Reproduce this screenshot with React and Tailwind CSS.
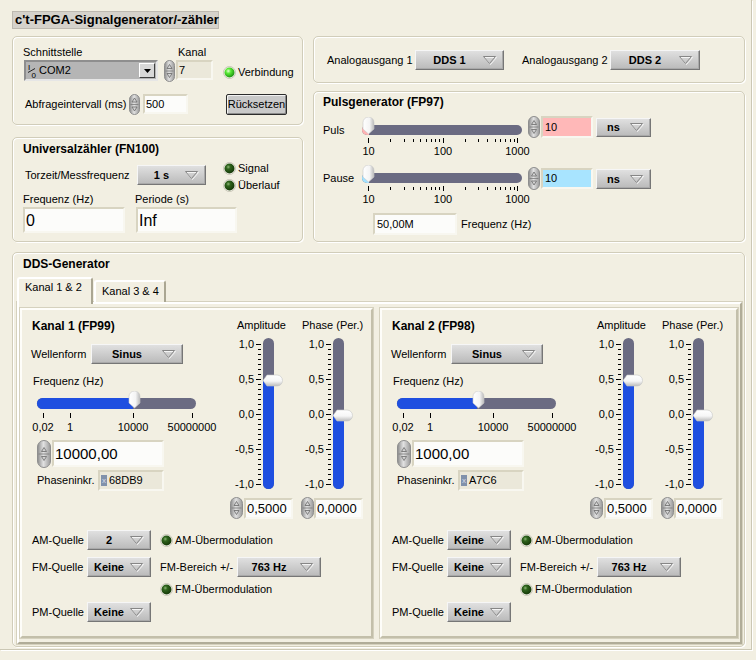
import React from "react";

const SF = "'Liberation Sans', Arial, sans-serif";

function Tri() {
  return (
    <svg width="14" height="9" viewBox="0 0 14 9" className="shrink-0">
      <polygon points="1.5,1.5 13.5,1.5 7.5,8.5" fill="none" stroke="#f4f4f4" />
      <polygon points="0.5,0.5 12.5,0.5 6.5,7.5" fill="none" stroke="#868686" />
    </svg>
  );
}

function Ring({ cls, text }) {
  return (
    <div
      className={`flex items-center shrink-0 border border-t-[#f6f6f6] border-l-[#f6f6f6] border-r-[#767676] border-b-[#767676] bg-linear-to-b from-[#e0e0e0] via-[#cdcdcd] to-[#bababa] shadow-[inset_-1px_-1px_0_#a9a9a9] ${cls}`}
    >
      <span className="flex-1 text-center text-[11px] font-bold leading-none whitespace-nowrap">{text}</span>
      <span className="pr-[6px] flex items-center">
        <Tri />
      </span>
    </div>
  );
}

function Spin({ w = 12, h = 22 }) {
  const m = h / 2;
  const c = w / 2;
  return (
    <svg width={w} height={h} viewBox={`0 0 ${w} ${h}`} className="shrink-0 block">
      <defs>
        <linearGradient id="spg" x1="0" y1="0" x2="1" y2="0">
          <stop offset="0" stopColor="#8a8a8a" />
          <stop offset="0.45" stopColor="#e2e2e2" />
          <stop offset="1" stopColor="#999999" />
        </linearGradient>
      </defs>
      <rect x="0.5" y="0.5" width={w - 1} height={h - 1} rx={(w - 1) / 2} fill="url(#spg)" stroke="#8e8e8e" />
      <line x1="1.5" y1={m} x2={w - 1.5} y2={m} stroke="#7a7a7a" strokeWidth="0.8" />
      <path d={`M${c - 2.5} ${m - 2.5} L${c} ${m - 6.5} L${c + 2.5} ${m - 2.5} Z`} fill="#d4d4d4" stroke="#6a6a6a" strokeWidth="0.8" />
      <path d={`M${c - 2.5} ${m + 2.5} L${c} ${m + 6.5} L${c + 2.5} ${m + 2.5} Z`} fill="#d4d4d4" stroke="#6a6a6a" strokeWidth="0.8" />
    </svg>
  );
}

function Led({ on = false }) {
  const id = on ? "ledOn" : "ledOff";
  return (
    <svg width="13" height="13" viewBox="0 0 13 13" className="shrink-0 block">
      <defs>
        <radialGradient id="ledOn" cx="0.38" cy="0.35" r="0.7">
          <stop offset="0" stopColor="#e4ffd0" />
          <stop offset="0.35" stopColor="#5aea36" />
          <stop offset="1" stopColor="#1a8a0e" />
        </radialGradient>
        <radialGradient id="ledOff" cx="0.38" cy="0.35" r="0.7">
          <stop offset="0" stopColor="#8cb676" />
          <stop offset="0.3" stopColor="#2f641c" />
          <stop offset="1" stopColor="#133406" />
        </radialGradient>
      </defs>
      <circle cx="6.5" cy="6.5" r="6" fill="#fbfaf3" stroke="#bdb9a8" strokeWidth="0.8" />
      <circle cx="6.5" cy="6.5" r="5" fill={`url(#${id})`} />
    </svg>
  );
}

function Field({ cls = "", bg = "bg-[#fcfcfa]", children }) {
  return (
    <div
      className={`flex items-center shrink-0 overflow-hidden whitespace-nowrap border-2 border-t-[#d8d4c1] border-l-[#d8d4c1] border-r-[#f8f7f0] border-b-[#f8f7f0] pl-[1px] ${bg} ${cls}`}
    >
      {children}
    </div>
  );
}

function HThumb() {
  return (
    <svg width="13" height="18" viewBox="0 0 13 18" className="block">
      <defs>
        <linearGradient id="htg" x1="0" y1="0" x2="1" y2="0">
          <stop offset="0" stopColor="#ffffff" />
          <stop offset="0.6" stopColor="#f4f4f4" />
          <stop offset="1" stopColor="#b9b9b9" />
        </linearGradient>
      </defs>
      <path d="M1 5.5 A5.5 5.5 0 0 1 12 5.5 V12 L6.5 17 L1 12 Z" fill="url(#htg)" stroke="#c8c8c8" strokeWidth="0.6" />
    </svg>
  );
}

function VThumb() {
  return (
    <svg width="21" height="13" viewBox="0 0 21 13" className="block">
      <defs>
        <linearGradient id="vtg" x1="0" y1="0" x2="0" y2="1">
          <stop offset="0" stopColor="#ffffff" />
          <stop offset="0.55" stopColor="#f6f6f6" />
          <stop offset="1" stopColor="#bcbcbc" />
        </linearGradient>
      </defs>
      <path d="M1 6.5 L5 1 H15 A5.5 5.5 0 0 1 15 12 H5 Z" fill="url(#vtg)" stroke="#c6c6c6" strokeWidth="0.6" />
    </svg>
  );
}

function LogScale() {
  const ticks = [];
  [10, 100].forEach((b) => {
    for (let k = 1; k < 10; k++) ticks.push({ v: b * k, major: k === 1 });
  });
  ticks.push({ v: 1000, major: true });
  const xp = (v) => 6 + 74.5 * Math.log10(v / 10);
  return (
    <svg width="160" height="22" className="block overflow-visible">
      {ticks.map((t) => {
        const x = Math.round(xp(t.v)) + 0.5;
        return <line key={t.v} x1={x} x2={x} y1={t.major ? 3 : 4} y2={t.major ? 8 : 7} stroke="#000" />;
      })}
      {[
        ["10", 10],
        ["100", 100],
        ["1000", 1000],
      ].map(([s, v]) => (
        <text key={s} x={xp(v) + 0.5} y="20" textAnchor="middle" fontSize="11" fontFamily={SF} fill="#000">
          {s}
        </text>
      ))}
    </svg>
  );
}

function FreqScale() {
  const t = [
    ["0,02", 6],
    ["1", 33],
    ["10000", 96],
    ["50000000", 155],
  ];
  return (
    <svg width="159" height="24" className="block overflow-visible">
      {t.map(([s, x]) => (
        <g key={s}>
          <line x1={x + 0.5} x2={x + 0.5} y1="4" y2="9" stroke="#000" />
          <text x={x} y="22" textAnchor="middle" fontSize="11" fontFamily={SF} fill="#000">
            {s}
          </text>
        </g>
      ))}
    </svg>
  );
}

function VScale() {
  const majors = [
    ["1,0", 6],
    ["0,5", 41],
    ["0,0", 76],
    ["-0,5", 111],
    ["-1,0", 146],
  ];
  const minors = [];
  for (let i = 0; i < 4; i++) for (let k = 1; k < 7; k++) minors.push(6 + 35 * i + 5 * k);
  return (
    <svg width="35" height="151" className="shrink-0 block overflow-visible">
      {majors.map(([t, y]) => (
        <g key={t}>
          <line x1="28" x2="33" y1={y + 0.5} y2={y + 0.5} stroke="#000" />
          <text x="26" y={y + 4} textAnchor="end" fontSize="11" fontFamily={SF} fill="#000">
            {t}
          </text>
        </g>
      ))}
      {minors.map((y) => (
        <line key={y} x1="30" x2="33" y1={y + 0.5} y2={y + 0.5} stroke="#000" />
      ))}
    </svg>
  );
}

function VCol({ label, labelCls, thumbCls, fillCls, value, spinCls, fieldCls }) {
  return (
    <div className="flex flex-col w-[70px] shrink-0">
      <div className={`mt-[9px] h-[13px] whitespace-nowrap ${labelCls}`}>{label}</div>
      <div className="relative mt-[6px] h-[151px] flex">
        <VScale />
        <div className="w-[11px] h-[151px] rounded-full bg-[#6b6b82] flex flex-col justify-end overflow-hidden">
          <div className={`w-full bg-[#1f4fe0] ${fillCls}`} />
        </div>
        <div className={`absolute left-[34px] ${thumbCls}`}>
          <VThumb />
        </div>
      </div>
      <div className="mt-[8px] flex items-start">
        <div className={spinCls}>
          <Spin w={13} h={22} />
        </div>
        <Field cls={`mt-[1px] h-[21px] text-[13px] ${fieldCls}`}>{value}</Field>
      </div>
    </div>
  );
}

function Channel({ title, freq, inc, am, fillCls, thumbCls, widthCls }) {
  return (
    <div
      className={`flex flex-col shrink-0 h-[330px] border-2 border-t-[#fefdf9] border-l-[#fefdf9] border-r-[#c3bfaa] border-b-[#c3bfaa] shadow-[0_0_0_1px_#d5d1be] ${widthCls}`}
    >
      <div className="flex">
        <div className="flex flex-col w-[206px] shrink-0">
          <div className="mt-[9px] pl-[10px] h-[14px] text-[12px] font-bold leading-[14px] whitespace-nowrap">{title}</div>
          <div className="mt-[11px] flex items-center h-[20px]">
            <span className="ml-[9px] w-[60px]">Wellenform</span>
            <Ring cls="w-[92px] h-[20px]" text="Sinus" />
          </div>
          <div className="mt-[11px] pl-[11px] h-[13px]">Frequenz (Hz)</div>
          <div className="mt-[3px] ml-[15px] h-[42px]">
            <div className="relative mt-[7px] w-[159px] h-[11px] rounded-full bg-[#6b6b82]">
              <div className={`h-full rounded-l-full bg-[#1f4fe0] ${fillCls}`} />
              <div className={`absolute top-[-7px] ${thumbCls}`}>
                <HThumb />
              </div>
            </div>
            <FreqScale />
          </div>
          <div className="mt-[7px] ml-[15px] flex items-start">
            <Spin w={14} h={28} />
            <Field cls="ml-[1px] w-[112px] h-[27px] text-[15px]">{freq}</Field>
          </div>
          <div className="mt-[2px] ml-[15px] flex items-center">
            <span className="w-[61px]">Phaseninkr.</span>
            <Field cls="w-[66px] h-[21px]" bg="bg-[#ebe8da]">
              <span className="flex items-center justify-center w-[6px] h-[11px] bg-[#8091ab] text-[8px] leading-none text-[#d8dcea] mr-[2px]">
                x
              </span>
              {inc}
            </Field>
          </div>
        </div>
        <VCol
          label="Amplitude"
          labelCls="pl-[9px]"
          thumbCls="top-[36px]"
          fillCls="h-[109px]"
          value="0,5000"
          spinCls="ml-[2px]"
          fieldCls="ml-[1px] w-[49px]"
        />
        <VCol
          label="Phase (Per.)"
          labelCls="pl-[4px]"
          thumbCls="top-[71px]"
          fillCls="h-[75px]"
          value="0,0000"
          spinCls="ml-[3px]"
          fieldCls="w-[49px]"
        />
      </div>
      <div className="mt-[11px] flex items-center h-[20px]">
        <span className="ml-[10px] w-[55px]">AM-Quelle</span>
        <Ring cls="w-[64px] h-[20px]" text={am} />
        <span className="ml-[9px]">
          <Led />
        </span>
        <span className="ml-[2px]">AM-Übermodulation</span>
      </div>
      <div className="mt-[7px] flex items-center h-[20px]">
        <span className="ml-[10px] w-[55px]">FM-Quelle</span>
        <Ring cls="w-[64px] h-[20px]" text="Keine" />
        <span className="ml-[9px] w-[77px] whitespace-nowrap">FM-Bereich +/-</span>
        <Ring cls="w-[84px] h-[20px]" text="763 Hz" />
      </div>
      <div className="mt-[6px] flex items-center h-[13px]">
        <span className="ml-[138px]">
          <Led />
        </span>
        <span className="ml-[2px]">FM-Übermodulation</span>
      </div>
      <div className="mt-[6px] flex items-center h-[20px]">
        <span className="ml-[10px] w-[55px]">PM-Quelle</span>
        <Ring cls="w-[64px] h-[20px]" text="Keine" />
      </div>
    </div>
  );
}

const panel =
  "rounded-[5px] border border-[#d1cdba] shadow-[inset_1px_1px_0_#ffffff,1px_1px_0_#ffffff]";

function IOIcon() {
  return (
    <svg width="11" height="16" viewBox="0 0 11 16" className="shrink-0 block">
      <text x="1" y="7" fontSize="8" fontFamily={SF} fill="#000">I</text>
      <line x1="1" y1="9.5" x2="8" y2="5.5" stroke="#000" strokeWidth="0.8" />
      <text x="4.5" y="15" fontSize="8" fontFamily={SF} fill="#000">0</text>
    </svg>
  );
}

export default function App() {
  return (
    <div className="w-[756px] h-[660px] overflow-hidden bg-[#f2efe2] text-black text-[11px] leading-[13px] font-['Liberation_Sans',Arial,sans-serif]">
      <div className="w-[752px] h-[650px] border-r border-b border-[#cbc7b4] shadow-[1px_1px_0_#ffffff] pl-[12px] pt-[11px]">
        {/* Title */}
        <div className="flex items-center h-[18px] w-[207px] px-[2px] bg-[#d5d2cb] border border-[#bdb9b0] text-[13px] font-bold leading-[16px] whitespace-nowrap">
          c't-FPGA-Signalgenerator/-zähler
        </div>

        <div className="mt-[7px] flex gap-[10px]">
          {/* Left column */}
          <div className="flex flex-col gap-[12px] w-[291px] shrink-0">
            <div className={`${panel} h-[89px] flex flex-col`}>
              <div className="mt-[9px] flex h-[13px]">
                <span className="ml-[10px] w-[155px]">Schnittstelle</span>
                <span>Kanal</span>
              </div>
              <div className="mt-[1px] flex items-start">
                <div className="ml-[11px] w-[134px] h-[21px] flex items-center bg-[#b5b5b5] border-2 border-t-[#8e8e8e] border-l-[#8e8e8e] border-r-[#e6e6e6] border-b-[#e6e6e6]">
                  <span className="ml-[1px]">
                    <IOIcon />
                  </span>
                  <span className="ml-[1px]">COM2</span>
                  <div className="ml-auto mr-[1px] w-[16px] h-[15px] flex items-center justify-center bg-[#d8d8d8] border border-t-[#ffffff] border-l-[#ffffff] border-r-[#404040] border-b-[#404040]">
                    <svg width="7" height="4" viewBox="0 0 7 4" className="block">
                      <polygon points="0,0 7,0 3.5,4" fill="#000" />
                    </svg>
                  </div>
                </div>
                <span className="ml-[6px]">
                  <Spin w={11} h={22} />
                </span>
                <Field cls="ml-[1px] w-[37px] h-[20px]" bg="bg-[#ebe8da]">
                  7
                </Field>
                <div className="ml-[10px] mt-[6px] h-[13px] flex items-center">
                  <Led on />
                  <span className="ml-[2px]">Verbindung</span>
                </div>
              </div>
              <div className="mt-[11px] flex items-center">
                <span className="ml-[12px] w-[104px] whitespace-nowrap">Abfrageintervall (ms)</span>
                <Spin w={11} h={21} />
                <Field cls="ml-[3px] w-[45px] h-[20px]">500</Field>
                <div className="ml-[38px] mt-[1px] w-[61px] h-[21px] flex items-center justify-center bg-[#c9c9c9] border border-[#2c2c2c] rounded-[2px] shadow-[inset_1px_1px_0_#f2f2f2,inset_-1px_-1px_0_#8c8c8c]">
                  Rücksetzen
                </div>
              </div>
            </div>

            <div className={`${panel} h-[105px] flex flex-col`}>
              <div className="mt-[4px] pl-[10px] h-[14px] text-[12px] font-bold leading-[14px]">Universalzähler (FN100)</div>
              <div className="mt-[4px] h-[32px] flex items-start">
                <div className="mt-[5px] h-[20px] flex items-center">
                  <span className="ml-[12px] w-[112px] whitespace-nowrap">Torzeit/Messfrequenz</span>
                  <Ring cls="w-[69px] h-[20px]" text="1 s" />
                </div>
                <div className="ml-[17px] flex flex-col">
                  <div className="h-[17px] flex items-center">
                    <Led />
                    <span className="ml-[2px]">Signal</span>
                  </div>
                  <div className="h-[17px] flex items-center">
                    <Led />
                    <span className="ml-[2px]">Überlauf</span>
                  </div>
                </div>
              </div>
              <div className="mt-[1px] h-[13px] flex">
                <span className="ml-[10px] w-[112px]">Frequenz (Hz)</span>
                <span>Periode (s)</span>
              </div>
              <div className="mt-[1px] flex">
                <Field cls="ml-[10px] w-[102px] h-[26px] text-[16px]">0</Field>
                <Field cls="ml-[11px] w-[101px] h-[26px] text-[16px]">Inf</Field>
              </div>
            </div>
          </div>

          {/* Right column */}
          <div className="flex flex-col gap-[8px] w-[432px] shrink-0">
            <div className={`${panel} h-[47px]`}>
              <div className="mt-[13px] h-[20px] flex items-center">
                <span className="ml-[13px] w-[88px] whitespace-nowrap">Analogausgang 1</span>
                <Ring cls="w-[89px] h-[20px]" text="DDS 1" />
                <span className="ml-[18px] w-[88px] whitespace-nowrap">Analogausgang 2</span>
                <Ring cls="w-[90px] h-[20px]" text="DDS 2" />
              </div>
            </div>

            <div className={`${panel} h-[151px] flex flex-col`}>
              <div className="mt-[3px] pl-[9px] h-[14px] text-[12px] font-bold leading-[14px]">Pulsgenerator (FP97)</div>
              <div className="mt-[7px] h-[51px] flex items-start">
                <span className="ml-[9px] w-[39px] mt-[8px]">Puls</span>
                <div className="relative mt-[1px] w-[160px]">
                  <div className="mt-[8px] w-[160px] h-[10px] rounded-full bg-[#6b6b82] overflow-hidden">
                    <div className="w-[7px] h-full bg-[#ffb3b3]" />
                  </div>
                  <div className="absolute top-0 left-0">
                    <HThumb />
                  </div>
                  <LogScale />
                </div>
                <span className="ml-[6px]">
                  <Spin w={12} h={22} />
                </span>
                <Field cls="ml-[1px] w-[52px] h-[22px] pl-[2px]" bg="bg-[#ffb8b8]">
                  10
                </Field>
                <Ring cls="ml-[3px] mt-[2px] w-[55px] h-[19px]" text="ns" />
              </div>
              <div className="h-[46px] flex items-start">
                <span className="ml-[9px] w-[39px] mt-[5px]">Pause</span>
                <div className="relative -mt-[2px] w-[160px]">
                  <div className="mt-[8px] w-[160px] h-[10px] rounded-full bg-[#6b6b82] overflow-hidden">
                    <div className="w-[7px] h-full bg-[#a3e2ff]" />
                  </div>
                  <div className="absolute top-0 left-0">
                    <HThumb />
                  </div>
                  <LogScale />
                </div>
                <span className="ml-[6px]">
                  <Spin w={12} h={23} />
                </span>
                <Field cls="ml-[1px] mt-[1px] w-[52px] h-[21px] pl-[2px]" bg="bg-[#a8e4ff]">
                  10
                </Field>
                <Ring cls="ml-[3px] mt-[2px] w-[55px] h-[20px]" text="ns" />
              </div>
              <div className="flex items-center">
                <Field cls="ml-[59px] w-[84px] h-[22px] pl-[2px]">50,00M</Field>
                <span className="ml-[4px]">Frequenz (Hz)</span>
              </div>
            </div>
          </div>
        </div>

        {/* DDS Generator */}
        <div className={`${panel} mt-[10px] w-[733px] h-[395px] flex flex-col`}>
          <div className="mt-[4px] pl-[10px] h-[14px] text-[12px] font-bold leading-[14px]">DDS-Generator</div>
          <div className="mt-[6px] ml-[4px]">
            <div className="flex items-end h-[25px]">
              <div className="relative z-10 -mb-[2px] w-[76px] h-[27px] bg-[#f2efe2] border-2 border-b-0 border-t-[#ffffff] border-l-[#ffffff] border-r-[#aaa692] rounded-t-[3px] pl-[6px] pt-[2px] whitespace-nowrap">
                {"Kanal 1 & 2"}
              </div>
              <div className="ml-[1px] w-[72px] h-[22px] bg-[#f2efe2] border-2 border-b-0 border-t-[#ffffff] border-l-[#ffffff] border-r-[#aaa692] rounded-t-[3px] pl-[6px] pt-[3px] whitespace-nowrap">
                {"Kanal 3 & 4"}
              </div>
            </div>
            <div className="w-[725px] h-[342px] border-2 border-t-[#ffffff] border-l-[#ffffff] border-r-[#b0ac98] border-b-[#b0ac98] shadow-[0_0_0_1px_#d5d1be] flex items-start pt-[4px] pl-[1px] gap-[7px]">
              <Channel
                title="Kanal 1 (FP99)"
                freq="10000,00"
                inc="68DB9"
                am="2"
                fillCls="w-[96px]"
                thumbCls="left-[91px]"
                widthCls="w-[353px]"
              />
              <Channel
                title="Kanal 2 (FP98)"
                freq="1000,00"
                inc="A7C6"
                am="Keine"
                fillCls="w-[80px]"
                thumbCls="left-[75px]"
                widthCls="w-[358px]"
              />
            </div>
          </div>
        </div>
      </div>
    </div>
  );
}
